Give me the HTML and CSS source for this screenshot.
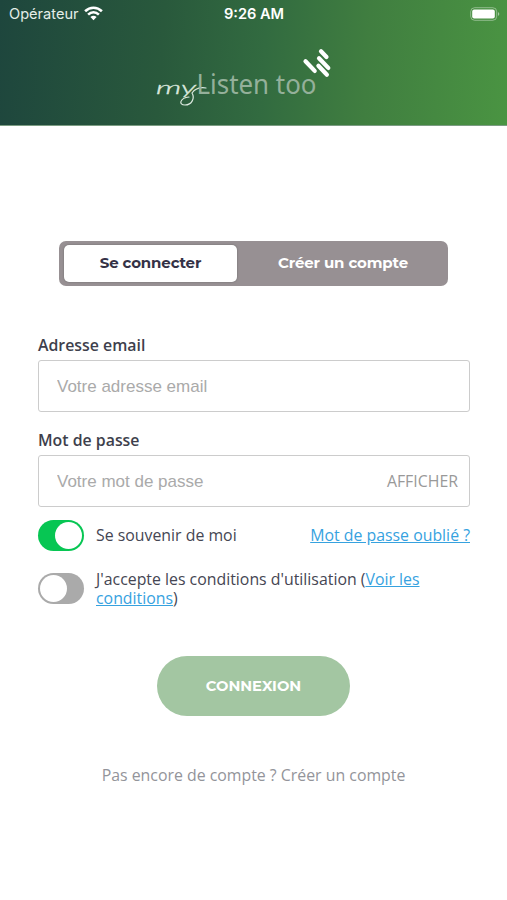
FILE: index.html
```html
<!DOCTYPE html>
<html lang="fr">
<head>
<meta charset="utf-8">
<title>myListen too</title>
<link rel="stylesheet" href="styles.css">
</head>
<body>
<header class="header">
  <div class="status">
    <div class="carrier"><span>Opérateur</span>
      <svg width="19" height="15" viewBox="0 0 19 15" fill="none" stroke="#fff" stroke-width="2.6"><path d="M1.1 5.2C6 .6 13 .6 17.9 5.2M4.1 8.6C7.3 5.6 11.7 5.6 14.9 8.6"/><path d="M6.4 11Q9.5 8.6 12.6 11L9.5 14.2Z" fill="#fff" stroke="none"/></svg>
    </div>
    <time class="clock">9:26 AM</time>
    <svg class="battery" width="30" height="14" viewBox="0 0 30 14"><rect x=".7" y=".7" width="26" height="12.6" rx="4" fill="none" stroke="#fff" stroke-opacity=".4"/><rect x="2.2" y="2.5" width="22.6" height="9" rx="2" fill="#fff"/><path d="M28 5q2.6 2 0 4z" fill="#fff" fill-opacity=".5"/></svg>
  </div>
  <svg class="logo" width="180" height="64" viewBox="0 0 180 64">
    <text class="logo-my" x="1" y="51" textLength="40" lengthAdjust="spacingAndGlyphs">my</text>
    <path d="M34 54C25 55 23 62 30 62C37 62 40 55 37 50C40 46 45 44 51 45" fill="none" stroke="#dce9df" stroke-width="1.2" stroke-linecap="round"/>
    <text class="logo-name" x="41.5" y="50.5" textLength="120" lengthAdjust="spacingAndGlyphs">Listen too</text>
    <path d="M150.5 18.2l9.2 9.7M166 8.2l5.5 5.8M164 15.3l9.3 9.6M163.4 22.8l8.5 9" fill="none" stroke="#fff" stroke-width="4.2" stroke-linecap="round"/>
  </svg>
</header>
<main class="main">
  <nav class="tabs"><button class="tab active"><span>Se connecter</span></button><button class="tab"><span>Créer un compte</span></button></nav>
  <form class="form">
    <label class="label" for="email">Adresse email</label>
    <div class="field"><input id="email" type="email" placeholder="Votre adresse email"></div>
    <label class="label" for="pw">Mot de passe</label>
    <div class="field"><input id="pw" type="password" placeholder="Votre mot de passe"><span class="show">AFFICHER</span></div>
    <div class="row remember"><span class="switch on"></span><span class="remember-text">Se souvenir de moi</span><a class="forgot">Mot de passe oublié ?</a></div>
    <div class="row terms"><span class="switch"></span><p class="terms-text">J'accepte les conditions d'utilisation (<a>Voir les<br>conditions</a>)</p></div>
    <button class="submit" type="button">CONNEXION</button>
    <p class="signup">Pas encore de compte ? Créer un compte</p>
  </form>
</main>
</body>
</html>
```
FILE: styles.css
```css
* { box-sizing: border-box; }
body { margin: 0; background: #fff; color: #454653; font: 15.87px/19px "Open Sans", sans-serif; }
button { border: 0; padding: 0; }
.header { height: 126px; background: linear-gradient(94deg, #1e463d 0%, #29593c 32%, #326b40 52%, #407e40 72%, #4a9442 100%); color: #fff; border-bottom: 1px solid #7b9c82; }
.status { display: grid; grid-template-columns: 1fr auto 1fr; align-items: center; height: 27px; padding: 0 7px 0 9px; font: 14.6px/20px Inter, sans-serif; }
.carrier { display: flex; align-items: center; gap: 5px; color: #e5eee8; }
.clock { font-weight: 600; margin-right: 1px; }
.battery { justify-self: end; }
.logo { display: block; margin: 16px 0 0 155px; overflow: visible; }
.logo-my { font: italic 300 17px Lato, sans-serif; fill: #dce9df; stroke: #dce9df; stroke-width: .3px; }
.logo-name { font: 400 27px "Noto Sans", sans-serif; fill: #94b09a; }
.main { padding: 115px 37px 0 38px; }
.tabs { display: flex; width: 389px; height: 45px; margin-left: 21px; padding: 4px 5px; border-radius: 7px; background: #979093; }
.tab { width: 173px; height: 37px; border-radius: 5px; background: none; color: #fff; font: 700 15px/35px Montserrat, "Open Sans", sans-serif; padding-bottom: 2px; letter-spacing: -.15px; }
.tab + .tab { width: 206px; padding-left: 6px; }
.active { background: #fff; color: #343246; box-shadow: 0 0 2px #666; }
.form { display: flex; flex-direction: column; padding-top: 48px; }
.label { height: 26px; line-height: 22px; font-weight: 600; color: #3e3f4c; }
.field { display: flex; align-items: center; height: 52px; margin-bottom: 17px; border: 1px solid #ccc; border-radius: 3px; padding: 0 11px 0 18px; }
.field input { flex: 1; min-width: 0; border: 0; padding: 2px 0 0; background: none; outline: 0; font: 17px "Liberation Sans", sans-serif; }
.field input::placeholder { color: #aaa; opacity: 1; }
.show { color: #999; }
.row { display: flex; align-items: center; }
.remember { height: 32px; margin-top: -5px; }
.switch { display: flex; flex: none; width: 46px; height: 31px; margin-right: 12px; padding: 2px; border-radius: 16px; background: #aaa; }
.switch::before { content: ""; width: 27px; height: 27px; border-radius: 50%; background: #fff; }
.on { justify-content: flex-end; background: #07c653; }
.forgot { margin-left: auto; }
a { color: #36a2df; text-decoration: underline; }
.terms { height: 40px; margin-top: 17px; }
.terms-text { margin: 1px 0 0; white-space: nowrap; }
.submit { align-self: center; width: 193px; height: 60px; margin: 48px 1px 0 0; border-radius: 30px; background: #a3c6a2; color: #fff; font: 700 14.7px Montserrat, "Open Sans", sans-serif; }
.signup { margin: 50px 1px 0 0; text-align: center; color: #93949a; }
```
